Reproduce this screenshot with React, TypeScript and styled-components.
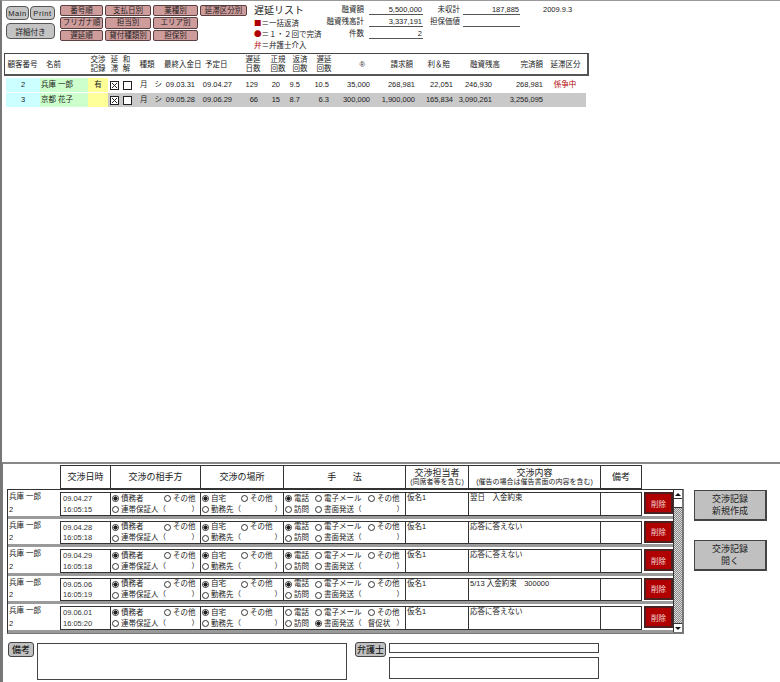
import styled, { createGlobalStyle } from 'styled-components'

const GlobalStyle = createGlobalStyle`
  html, body {
    margin: 0;
    padding: 0;
    background: #fff;
  }
  body {
    font-family: "Liberation Sans", "Noto Sans CJK JP", sans-serif;
    font-size: 7.5px;
    color: #222;
  }
`

const Page = styled.div`
  box-sizing: border-box;
  width: 780px;
  height: 682px;
  overflow: hidden;
  display: flex;
  flex-direction: column;
  border-top: 1px solid #999;
  border-left: 2px solid #777;
`

/* top bar */
const TopBar = styled.header`
  display: flex;
  height: 52px;
  padding: 4px 0 0 4px;
  box-sizing: border-box;
`

const NavGroup = styled.div`
  width: 49px;
  display: grid;
  grid-template-columns: 23px 25px;
  grid-template-rows: 14px 16px;
  column-gap: 1px;
  row-gap: 3px;
  align-self: flex-start;
  margin-top: 1px;
`

const NavButton = styled.button<{ $wide?: boolean }>`
  grid-column: ${({ $wide }) => ($wide ? '1 / 3' : 'auto')};
  padding: 0;
  background: #c4c4c4;
  border: 1px solid #555;
  border-radius: 4px;
  font: inherit;
  color: #222;
  letter-spacing: ${({ $wide }) => ($wide ? '0' : '0.6px')};
`

const SortGrid = styled.div`
  margin-left: 5px;
  width: 187px;
  display: grid;
  grid-template-columns: 43px 46px 45px 47px;
  grid-template-rows: 11px 12px 11px;
  column-gap: 2px;
  row-gap: 1px;
  align-self: flex-start;
`

const SortButton = styled.button`
  padding: 0;
  background: #cf9c9c;
  border: 1px solid #5a4040;
  border-radius: 2px;
  font: inherit;
  color: #222;
  line-height: 1;
  white-space: nowrap;
`

const TitleBlock = styled.div`
  margin-left: 7px;
  width: 70px;
  display: flex;
  flex-direction: column;
  flex: none;
`

const Title = styled.h1`
  margin: 0;
  font-size: 10px;
  font-weight: 400;
  line-height: 12px;
  height: 12px;
  white-space: nowrap;
`

const Legend = styled.div`
  height: 11px;
  line-height: 11px;
  white-space: nowrap;
`

const Mark = styled.span`
  font-family: "Noto Sans CJK JP", sans-serif;
  color: #b00000;
`

const Summary = styled.div`
  display: grid;
  grid-template-columns: 45px 54px 40px 57px auto;
  grid-auto-rows: 12px;
  margin-top: -2px;
  line-height: 14px;
`

const SummaryLabel = styled.div<{ $pad?: number }>`
  text-align: right;
  padding-right: ${({ $pad }) => $pad ?? 5}px;
  white-space: nowrap;
`

const SummaryValue = styled.div`
  text-align: right;
  padding-right: 1px;
  border-bottom: 1px solid #555;
`

const DateStamp = styled.div`
  padding-left: 23px;
`

/* list */
const headColumns = '35px 48px 20px 13px 11px 30px 41px 37px 26px 24px 20px 28px 33px 44px 37px 50px 43px 41px'
const listColumns = '34px 48px 20px 13px 12px 29px 34px 37px 26px 22px 20px 29px 41px 45px 38px 39px 51px 42px'

const ListHeader = styled.div`
  display: grid;
  grid-template-columns: ${headColumns};
  margin-left: 2px;
  width: 585px;
  height: 23px;
  box-sizing: border-box;
  border: 1px solid #444;
  border-bottom: 2px solid #555;
  border-right: 2px solid #555;
  align-items: center;
  line-height: 9px;
`

const HeadCell = styled.div<{ $align?: 'left' | 'right'; $pad?: number }>`
  white-space: nowrap;
  text-align: ${({ $align }) => $align ?? 'center'};
  padding-left: ${({ $align, $pad }) => ($align === 'left' ? $pad ?? 0 : 0)}px;
  padding-right: ${({ $align, $pad }) => ($align === 'right' ? $pad ?? 2 : 0)}px;
`

const ListRow = styled.div<{ $shaded?: boolean; $current?: boolean }>`
  position: relative;
  display: grid;
  grid-template-columns: ${listColumns};
  margin-left: 4px;
  margin-top: ${({ $current }) => ($current ? '2px' : '1px')};
  width: 580px;
  height: 14px;
  align-items: stretch;
  line-height: 14px;
  background: ${({ $shaded }) => ($shaded ? '#c9c9c9' : 'transparent')};
  /* record pointer on the window edge */
  &::before {
    content: ${({ $current }) => ($current ? "''" : 'none')};
    position: absolute;
    top: 0;
    bottom: 0;
    left: -6px;
    width: 2px;
    background: #111;
  }
`

const DataCell = styled.div<{ $align?: string; $bg?: string; $color?: string }>`
  text-align: ${({ $align }) => $align ?? 'right'};
  padding-right: ${({ $align }) => ($align === 'left' || $align === 'center' ? '0' : '1px')};
  padding-left: ${({ $align }) => ($align === 'left' ? '1px' : '0')};
  background: ${({ $bg }) => $bg ?? 'transparent'};
  color: ${({ $color }) => $color ?? 'inherit'};
  white-space: nowrap;
`

const CheckCell = styled.div`
  display: flex;
  align-items: flex-end;
  justify-content: center;
  padding-bottom: 2px;
`

const Box = styled.svg`
  display: block;
  width: 9px;
  height: 9px;
`

function CheckBox({ crossed }: { crossed?: boolean }) {
  return (
    <CheckCell>
      <Box viewBox='0 0 9 9'>
        <rect x='.5' y='.5' width='8' height='8' fill='#fff' stroke='#222' />
        {crossed && <path d='M2 2l5 5M7 2l-5 5' stroke='#222' fill='none' />}
      </Box>
    </CheckCell>
  )
}

const KindCell = styled.div`
  display: flex;
  justify-content: flex-end;
  gap: 7px;
`

/* negotiation records */
const Lower = styled.section`
  margin-top: auto;
  height: 220px;
  box-sizing: border-box;
  border-top: 2px solid #888;
  border-left: 1px solid #777;
  display: flex;
  flex-direction: column;
`

const LowerMain = styled.div`
  display: flex;
  padding-top: 1px;
`

const RecordColumn = styled.div`
  margin-left: 4px;
  width: 677px;
  flex: none;
`

const recordColumns = '52px 50px 90px 83px 122px 63px 132px 42px'

const RecordHead = styled.div`
  display: grid;
  grid-template-columns: 50px 90px 83px 122px 63px 132px 42px;
  margin-left: 53px;
  width: 582px;
  height: 24px;
  box-sizing: border-box;
  border-top: 1px solid #333;
`

const RecordHeadCell = styled.div<{ $spaced?: boolean }>`
  display: flex;
  flex-direction: column;
  align-items: center;
  justify-content: center;
  border-left: 1px solid #333;
  border-bottom: 1px solid #333;
  &:last-child {
    border-right: 1px solid #333;
  }
  font-size: 9px;
  line-height: 10px;
  white-space: nowrap;
  word-spacing: ${({ $spaced }) => ($spaced ? '14px' : '0')};
`

const HeadNote = styled.span`
  font-size: 7px;
  line-height: 8px;
`

const Portal = styled.div`
  position: relative;
  height: 145px;
  box-sizing: border-box;
  border: 1px solid #333;
  border-bottom: 2px solid #777;
  border-right: 2px solid #777;
  padding-right: 9px;
`

const RecordRow = styled.div`
  display: grid;
  grid-template-columns: ${recordColumns} 1fr;
  height: 28.6px;
  box-sizing: border-box;
  padding-top: 2px;
  border-bottom: 3px solid #9a9a9a;
  &:last-child {
    border-bottom: none;
  }
`

const NameCell = styled.div`
  display: flex;
  flex-direction: column;
  justify-content: space-between;
  padding: 0 0 1px 1px;
  line-height: 10px;
`

const BorderedCell = styled.div`
  border: 1px solid #333;
  border-right: none;
  box-sizing: border-box;
  padding: 0 0 0 1px;
  line-height: 10px;
  overflow: hidden;
  white-space: nowrap;
  &:nth-child(8) {
    border-right: 1px solid #333;
  }
`

const DateCell = styled(BorderedCell)`
  display: flex;
  flex-direction: column;
  justify-content: space-between;
  padding: 1px 0 0 2px;
  color: #333;
`

const ChoiceGrid = styled.div<{ $columns: string }>`
  display: grid;
  grid-template-columns: ${({ $columns }) => $columns};
  grid-auto-rows: 11px;
`

const Choice = styled.span`
  display: flex;
  align-items: center;
  gap: 2px;
  white-space: nowrap;
`

const RadioMark = styled.span<{ $on?: boolean }>`
  flex: none;
  box-sizing: border-box;
  width: 7px;
  height: 7px;
  border-radius: 50%;
  border: 1px solid #333;
  background: ${({ $on }) => ($on ? 'radial-gradient(circle, #222 55%, #fff 60%)' : '#fff')};
`

const FreeText = styled.span`
  flex: 1;
  display: flex;
  justify-content: space-between;
  gap: 4px;
  padding-right: 1px;
`

const DeleteSlot = styled.div`
  display: flex;
  align-items: flex-start;
  padding-left: 2px;
`

const DeleteButton = styled.button`
  width: 29px;
  height: 22px;
  padding: 0;
  background: #b00000;
  border: 2px solid #4a2020;
  color: #f0dada;
  font: inherit;
`

const ScrollBar = styled.div`
  position: absolute;
  top: 0;
  right: 0;
  bottom: 0;
  width: 8px;
  display: flex;
  flex-direction: column;
  border-left: 1px solid #333;
  background: repeating-conic-gradient(#888 0 25%, #ddd 0 50%) 0 0 / 2px 2px;
`

const ScrollArrow = styled.div<{ $down?: boolean }>`
  height: 8px;
  background: #fff;
  border-bottom: ${({ $down }) => ($down ? 'none' : '1px solid #333')};
  border-top: ${({ $down }) => ($down ? '1px solid #333' : 'none')};
  margin-top: ${({ $down }) => ($down ? 'auto' : '0')};
  display: flex;
  align-items: center;
  justify-content: center;
  &::after {
    content: '';
    border-left: 3px solid transparent;
    border-right: 3px solid transparent;
    border-${({ $down }) => ($down ? 'top' : 'bottom')}: 3px solid #111;
  }
`

const ScrollThumb = styled.div`
  height: 8px;
  background: #fff;
  border-bottom: 1px solid #333;
`

const ActionColumn = styled.div`
  margin-left: 10px;
  padding-top: 25px;
  display: flex;
  flex-direction: column;
  gap: 19px;
`

const ActionButton = styled.button`
  width: 73px;
  height: 31px;
  padding: 0;
  background: #c0c0c0;
  border: 1px solid #444;
  border-right-width: 2px;
  border-bottom-width: 2px;
  font: inherit;
  font-size: 9px;
  line-height: 12px;
  color: #222;
`

/* footer */
const Footer = styled.div`
  display: flex;
  align-items: flex-start;
  margin-top: 8px;
  padding-left: 5px;
`

const TagButton = styled.button<{ $width: number; $gap?: number }>`
  flex: none;
  width: ${({ $width }) => $width}px;
  margin-left: ${({ $gap }) => $gap ?? 0}px;
  padding: 0;
  background: #c0c0c0;
  border: 1px solid #444;
  border-radius: 3px;
  font: inherit;
  font-size: 9px;
  line-height: 12px;
  height: 15px;
`

const NoteBox = styled.div`
  box-sizing: border-box;
  width: 310px;
  height: 37px;
  margin: 1px 0 0 3px;
  border: 1px solid #444;
`

const LawyerStack = styled.div`
  display: flex;
  flex-direction: column;
  gap: 4px;
  margin: 1px 0 0 3px;
`

const LawyerBox = styled.div<{ $tall?: boolean }>`
  box-sizing: border-box;
  width: 210px;
  height: ${({ $tall }) => ($tall ? '22px' : '10px')};
  border: 1px solid #444;
`

const sortLabels = [
  '番号順', '支払日別', '業種別', '延滞区分別',
  'フリガナ順', '担当別', 'エリア別', '',
  '遅延順', '貸付種類別', '担保別', '',
]

const listHead: { text: string; align?: 'left' | 'right'; pad?: number }[] = [
  { text: '顧客番号' },
  { text: '名前', align: 'left', pad: 6 },
  { text: '交渉\n記録' },
  { text: '延\n滞' },
  { text: '和\n解' },
  { text: '種類' },
  { text: '最終入金日', align: 'left', pad: 2 },
  { text: '予定日', align: 'left', pad: 2 },
  { text: '遅延\n日数' },
  { text: '正規\n回数' },
  { text: '返済\n回数' },
  { text: '遅延\n回数 ' },
  { text: '®', align: 'right', pad: 6 },
  { text: '請求額', align: 'right' },
  { text: '利＆賠', align: 'right' },
  { text: '融資残高', align: 'right' },
  { text: '完済額', align: 'right' },
  { text: '延滞区分' },
]

const customers = [
  {
    no: '2', name: '兵庫 一郎', note: '有', last: '09.03.31', due: '09.04.27', days: '129', reg: '20', paid: '9.5',
    late: '10.5', unit: '35,000', bill: '268,981', interest: '22,051', balance: '246,930', done: '268,981', status: '係争中',
  },
  {
    no: '3', name: '京都 花子', note: '', last: '09.05.28', due: '09.06.29', days: '66', reg: '15', paid: '8.7',
    late: '6.3', unit: '300,000', bill: '1,900,000', interest: '165,834', balance: '3,090,261', done: '3,256,095', status: '',
  },
]

const records = [
  { date: '09.04.27', time: '16:05:15', content: '翌日　入金約束', letter: false },
  { date: '09.04.28', time: '16:05:18', content: '応答に答えない', letter: false },
  { date: '09.04.29', time: '16:05:18', content: '応答に答えない', letter: false },
  { date: '09.05.06', time: '16:05:19', content: '5/13 入金約束　300000', letter: false },
  { date: '09.06.01', time: '16:05:20', content: '応答に答えない', letter: true },
]

function Radio({ on, children }: { on?: boolean; children: React.ReactNode }) {
  return (
    <Choice>
      <RadioMark $on={on} />
      {children}
    </Choice>
  )
}

function MultiLine({ text }: { text: string }) {
  return (
    <>
      {text.split('\n').map(part => (
        <div key={part}>{part}</div>
      ))}
    </>
  )
}

export default function App() {
  return (
    <Page>
      <GlobalStyle />
      <TopBar>
        <NavGroup>
          <NavButton>Main</NavButton>
          <NavButton>Print</NavButton>
          <NavButton $wide>詳細付き</NavButton>
        </NavGroup>

        <SortGrid>
          {sortLabels.map((label, i) =>
            label ? <SortButton key={label}>{label}</SortButton> : <span key={i} />
          )}
        </SortGrid>

        <TitleBlock>
          <Title>遅延リスト</Title>
          <Legend><Mark>■</Mark>＝一括返済</Legend>
          <Legend><Mark>●</Mark>＝１・２回で完済</Legend>
          <Legend><Mark>弁</Mark>＝弁護士介入</Legend>
        </TitleBlock>

        <Summary>
          <SummaryLabel>融資額</SummaryLabel>
          <SummaryValue>5,500,000</SummaryValue>
          <SummaryLabel $pad={3}>未収計</SummaryLabel>
          <SummaryValue>187,885</SummaryValue>
          <DateStamp>2009.9.3</DateStamp>

          <SummaryLabel>融資残高計</SummaryLabel>
          <SummaryValue>3,337,191</SummaryValue>
          <SummaryLabel $pad={3}>担保価値</SummaryLabel>
          <SummaryValue />
          <span />

          <SummaryLabel>件数</SummaryLabel>
          <SummaryValue>2</SummaryValue>
        </Summary>
      </TopBar>

      <ListHeader>
        {listHead.map(({ text, align, pad }) => (
          <HeadCell key={text} $align={align} $pad={pad}>
            <MultiLine text={text} />
          </HeadCell>
        ))}
      </ListHeader>

      {customers.map((c, i) => (
        <ListRow key={c.no} $current={i === 0} $shaded={i === 1}>
          <DataCell $align='center' $bg='#ccffff'>{c.no}</DataCell>
          <DataCell $align='left' $bg='#ccffcc'>{c.name}</DataCell>
          <DataCell $align='center' $bg='#ffff99'>{c.note}</DataCell>
          <CheckBox crossed />
          <CheckBox />
          <KindCell><span>月</span><span>シ</span></KindCell>
          <DataCell>{c.last}</DataCell>
          <DataCell>{c.due}</DataCell>
          <DataCell>{c.days}</DataCell>
          <DataCell>{c.reg}</DataCell>
          <DataCell>{c.paid}</DataCell>
          <DataCell>{c.late}</DataCell>
          <DataCell>{c.unit}</DataCell>
          <DataCell>{c.bill}</DataCell>
          <DataCell>{c.interest}</DataCell>
          <DataCell>{c.balance}</DataCell>
          <DataCell>{c.done}</DataCell>
          <DataCell $align='center' $color='#b00000'>{c.status}</DataCell>
        </ListRow>
      ))}

      <Lower>
        <LowerMain>
          <RecordColumn>
            <RecordHead>
              <RecordHeadCell>交渉日時</RecordHeadCell>
              <RecordHeadCell>交渉の相手方</RecordHeadCell>
              <RecordHeadCell>交渉の場所</RecordHeadCell>
              <RecordHeadCell $spaced>手 法</RecordHeadCell>
              <RecordHeadCell>交渉担当者<HeadNote>(同席者等を含む)</HeadNote></RecordHeadCell>
              <RecordHeadCell>交渉内容<HeadNote>(催告の場合は催告書面の内容を含む)</HeadNote></RecordHeadCell>
              <RecordHeadCell>備考</RecordHeadCell>
            </RecordHead>

            <Portal>
              {records.map(r => (
                <RecordRow key={r.date}>
                  <NameCell>
                    <span>兵庫 一郎</span>
                    <span>2</span>
                  </NameCell>
                  <DateCell>
                    <span>{r.date}</span>
                    <span>{r.time}</span>
                  </DateCell>
                  <BorderedCell>
                    <ChoiceGrid $columns='52px 1fr'>
                      <Radio on>債務者</Radio>
                      <Radio>その他</Radio>
                    </ChoiceGrid>
                    <ChoiceGrid $columns='1fr'>
                      <Radio><FreeText><span>連帯保証人（</span><span>）</span></FreeText></Radio>
                    </ChoiceGrid>
                  </BorderedCell>
                  <BorderedCell>
                    <ChoiceGrid $columns='39px 1fr'>
                      <Radio on>自宅</Radio>
                      <Radio>その他</Radio>
                    </ChoiceGrid>
                    <ChoiceGrid $columns='1fr'>
                      <Radio><FreeText><span>勤務先（</span><span>）</span></FreeText></Radio>
                    </ChoiceGrid>
                  </BorderedCell>
                  <BorderedCell>
                    <ChoiceGrid $columns='30px 53px 1fr'>
                      <Radio on={!r.letter}>電話</Radio>
                      <Radio>電子メール</Radio>
                      <Radio>その他</Radio>
                    </ChoiceGrid>
                    <ChoiceGrid $columns='30px 1fr'>
                      <Radio>訪問</Radio>
                      <Radio on={r.letter}>
                        <FreeText>
                          <span>書面発送（</span>
                          {r.letter && <span>督促状</span>}
                          <span>）</span>
                        </FreeText>
                      </Radio>
                    </ChoiceGrid>
                  </BorderedCell>
                  <BorderedCell>仮名1</BorderedCell>
                  <BorderedCell>{r.content}</BorderedCell>
                  <BorderedCell />
                  <DeleteSlot>
                    <DeleteButton>削除</DeleteButton>
                  </DeleteSlot>
                </RecordRow>
              ))}
              <ScrollBar>
                <ScrollArrow />
                <ScrollThumb />
                <ScrollArrow $down />
              </ScrollBar>
            </Portal>
          </RecordColumn>

          <ActionColumn>
            <ActionButton>交渉記録<br />新規作成</ActionButton>
            <ActionButton>交渉記録<br />開く</ActionButton>
          </ActionColumn>
        </LowerMain>

        <Footer>
          <TagButton $width={26}>備考</TagButton>
          <NoteBox />
          <TagButton $width={31} $gap={8}>弁護士</TagButton>
          <LawyerStack>
            <LawyerBox />
            <LawyerBox $tall />
          </LawyerStack>
        </Footer>
      </Lower>
    </Page>
  )
}
